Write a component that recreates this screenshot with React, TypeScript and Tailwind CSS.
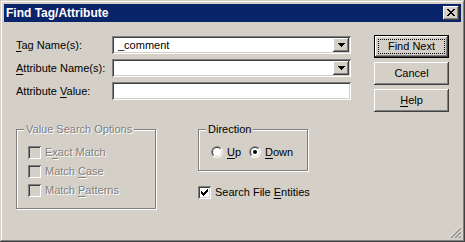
import React from 'react';

const raised = 'shadow-[inset_-1px_-1px_#404040,inset_1px_1px_#fff,inset_-2px_-2px_#808080]';
const sunken = 'shadow-[inset_1px_1px_#808080,inset_-1px_-1px_#fff,inset_2px_2px_#404040,inset_-2px_-2px_#d4d0c8]';
const disabledText = 'text-[#808080] [text-shadow:1px_1px_0_#fff]';

// classic 7x7 check mark, one 3px run per column
const checkCols = [2, 3, 4, 3, 2, 1, 0];

function CheckBox({ checked, disabled }: { checked?: boolean; disabled?: boolean }) {
  return (
    <span className={`w-[13px] h-[13px] shrink-0 flex items-center justify-center ${sunken} ${disabled ? 'bg-[#d4d0c8]' : 'bg-white'}`}>
      {checked && (
        <svg width="7" height="7" viewBox="0 0 7 7" shapeRendering="crispEdges">
          {checkCols.map((y, x) => (
            <rect key={x} x={x} y={y} width="1" height="3" fill="#000" />
          ))}
        </svg>
      )}
    </span>
  );
}

function Radio({ checked }: { checked?: boolean }) {
  const half = (r: number) => {
    const d = r * 0.7071;
    return `M${6 - d} ${6 + d}A${r} ${r} 0 0 1 ${6 + d} ${6 - d}Z`;
  };
  return (
    <svg width="12" height="12" viewBox="0 0 12 12" className="shrink-0">
      <circle cx="6" cy="6" r="6" fill="#fff" />
      <path d={half(6)} fill="#808080" />
      <circle cx="6" cy="6" r="5" fill="#d4d0c8" />
      <path d={half(5)} fill="#404040" />
      <circle cx="6" cy="6" r="4" fill="#fff" />
      {checked && <circle cx="6" cy="6" r="2" fill="#000" />}
    </svg>
  );
}

function Key({ children }: { children: React.ReactNode }) {
  return <u className="underline underline-offset-[2px]">{children}</u>;
}

function Field({ label, value, combo }: { label: React.ReactNode; value?: string; combo?: boolean }) {
  return (
    <div className="flex items-center h-[18px]">
      <span className="w-[96px] shrink-0">{label}</span>
      <div className={`w-[239px] h-[18px] flex p-[2px] bg-white ${sunken}`}>
        <span className="flex-1 pl-[4px] leading-[14px]">{value}</span>
        {combo && (
          <span className={`w-[16px] h-[14px] bg-[#d4d0c8] flex items-center justify-center ${raised}`}>
            <svg width="7" height="4" viewBox="0 0 7 4" shapeRendering="crispEdges">
              <rect x="0" y="0" width="7" height="1" fill="#000" />
              <rect x="1" y="1" width="5" height="1" fill="#000" />
              <rect x="2" y="2" width="3" height="1" fill="#000" />
              <rect x="3" y="3" width="1" height="1" fill="#000" />
            </svg>
          </span>
        )}
      </div>
    </div>
  );
}

function Button({ children, primary }: { children: React.ReactNode; primary?: boolean }) {
  return (
    <div
      className={`relative w-[75px] h-[23px] bg-[#d4d0c8] flex items-center justify-center ${raised} ${
        primary ? 'border border-black' : ''
      }`}
    >
      <span>{children}</span>
      {primary && <span className="absolute inset-[3px] border border-dotted border-black" />}
    </div>
  );
}

function GroupBox({
  title,
  disabled,
  className,
  children,
}: {
  title: string;
  disabled?: boolean;
  className: string;
  children: React.ReactNode;
}) {
  return (
    <div className={`relative border border-[#808080] shadow-[inset_1px_1px_#fff,1px_1px_#fff] ${className}`}>
      <span className={`absolute left-[7px] top-[-7px] px-[2px] bg-[#d4d0c8] ${disabled ? disabledText : ''}`}>
        {title}
      </span>
      {children}
    </div>
  );
}

const closeRows = ['##....##', '.##..##.', '..####..', '...##...', '..####..', '.##..##.', '##....##'];

export default function App() {
  return (
    <div className="w-[465px] h-[242px] p-[4px] flex flex-col bg-[#d4d0c8] shadow-[inset_-1px_-1px_#404040,inset_1px_1px_#d4d0c8,inset_-2px_-2px_#808080,inset_2px_2px_#fff] font-['Liberation_Sans',Arial,sans-serif] text-[11px] leading-[13px] text-black select-none">
      {/* Title bar */}
      <div className="h-[18px] shrink-0 bg-[#0a246a] flex items-center justify-between pl-[2px] pr-[2px]">
        <span className="text-white font-bold text-[12px]">Find Tag/Attribute</span>
        <span className={`w-[16px] h-[14px] bg-[#d4d0c8] flex items-center justify-center pb-[1px] ${raised}`}>
          <svg width="8" height="7" viewBox="0 0 8 7" shapeRendering="crispEdges">
            {closeRows.map((row, y) =>
              row.split('').map((c, x) => (c === '#' ? <rect key={`${x}-${y}`} x={x} y={y} width="1" height="1" fill="#000" /> : null))
            )}
          </svg>
        </span>
      </div>

      {/* Body */}
      <div className="relative flex-1 flex px-[12px] pt-[13px]">
        <div className="w-[335px] pt-[1px]">
          <div className="flex flex-col gap-[5px]">
            <Field label={<><Key>T</Key>ag Name(s):</>} value="_comment" combo />
            <Field label={<><Key>A</Key>ttribute Name(s):</>} combo />
            <Field label={<>Attribute <Key>V</Key>alue:</>} />
          </div>

          <div className="flex mt-[29px]">
            <GroupBox title="Value Search Options" disabled className="w-[140px] h-[80px] pt-[16px] pl-[11px]">
              <div className={`flex flex-col gap-[6px] ${disabledText}`}>
                <div className="flex items-center gap-[4px] h-[13px]">
                  <CheckBox disabled />
                  <span>E<Key>x</Key>act Match</span>
                </div>
                <div className="flex items-center gap-[4px] h-[13px]">
                  <CheckBox disabled />
                  <span>Match <Key>C</Key>ase</span>
                </div>
                <div className="flex items-center gap-[4px] h-[13px]">
                  <CheckBox disabled />
                  <span>Match <Key>P</Key>atterns</span>
                </div>
              </div>
            </GroupBox>

            <div className="ml-[42px] flex flex-col">
              <GroupBox title="Direction" className="w-[110px] h-[42px] pt-[16px] pl-[12px]">
                <div className="flex h-[12px] items-center">
                  <div className="w-[38px] flex items-center gap-[4px]">
                    <Radio />
                    <span><Key>U</Key>p</span>
                  </div>
                  <div className="flex items-center gap-[4px]">
                    <Radio checked />
                    <span><Key>D</Key>own</span>
                  </div>
                </div>
              </GroupBox>
              <div className="flex items-center gap-[4px] mt-[15px] h-[13px]">
                <CheckBox checked />
                <span>Search File <Key>E</Key>ntities</span>
              </div>
            </div>
          </div>
        </div>

        <div className="ml-[23px] w-[75px] flex flex-col gap-[4px]">
          <Button primary>Find Next</Button>
          <Button>Cancel</Button>
          <Button>
            <Key>H</Key>elp
          </Button>
        </div>

        {/* Size grip */}
        <svg width="12" height="12" viewBox="0 0 12 12" className="absolute right-0 bottom-0">
          {[0, 4, 8].map((o) => (
            <g key={o}>
              <line x1={o + 0.5} y1="12" x2="12" y2={o + 0.5} stroke="#fff" strokeWidth="1" />
              <line x1={o + 1.5} y1="12" x2="12" y2={o + 1.5} stroke="#808080" strokeWidth="1" />
              <line x1={o + 2.5} y1="12" x2="12" y2={o + 2.5} stroke="#808080" strokeWidth="1" />
            </g>
          ))}
        </svg>
      </div>
    </div>
  );
}
